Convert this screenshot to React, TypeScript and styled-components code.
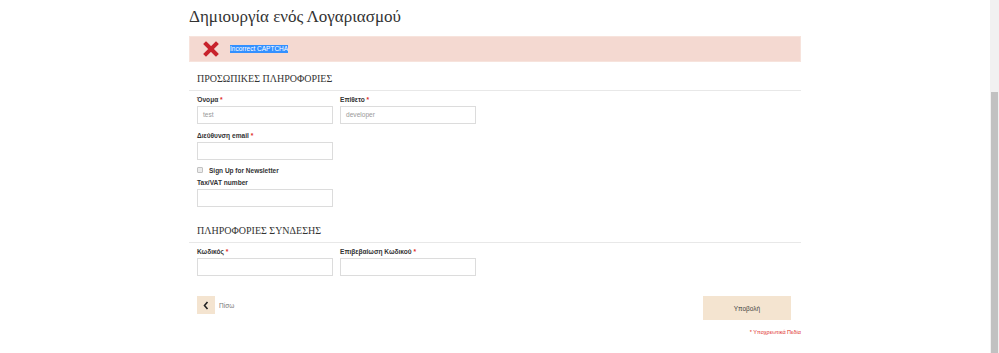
import React from "react";
import styled, { createGlobalStyle } from "styled-components";

const GlobalStyle = createGlobalStyle`
  html, body {
    margin: 0;
    padding: 0;
    background: #fff;
    overflow: hidden;
  }
  * { box-sizing: border-box; }
`;

const sans = `"Liberation Sans", Arial, sans-serif`;
const serif = `"Liberation Serif", "Times New Roman", serif`;

const Page = styled.div`
  display: flex;
  width: 999px;
  height: 353px;
  overflow: hidden;
`;

const Main = styled.main`
  flex: 1;
`;

const Container = styled.div`
  width: 612px;
  margin: 0 auto;
`;

const Title = styled.h1`
  margin: 0;
  padding-top: 4px;
  font-family: ${serif};
  font-weight: normal;
  font-size: 17px;
  line-height: 25px;
  color: #333;
`;

const ErrorBox = styled.div`
  display: flex;
  align-items: center;
  gap: 11px;
  height: 26px;
  margin-top: 7px;
  padding-left: 13px;
  background: #f4d9d1;
  border: 1px solid #f7e3dc;
`;

const Selected = styled.span`
  font-family: ${sans};
  font-size: 6.5px;
  color: #fff;
  background: #3390ff;
  line-height: 8px;
`;

const Section = styled.section<{ $top: number }>`
  margin-top: ${(p) => p.$top}px;
`;

const SectionTitle = styled.h2`
  margin: 0;
  padding: 0 8px 4px;
  font-family: ${serif};
  font-weight: normal;
  font-size: 10px;
  line-height: 14px;
  color: #333;
  border-bottom: 1px solid #e8e8e8;
`;

const Fields = styled.div`
  padding: 4px 8px 0;
`;

const Row = styled.div<{ $gap?: number }>`
  display: grid;
  grid-template-columns: 136px 136px;
  column-gap: 7px;
  margin-top: ${(p) => p.$gap ?? 0}px;
`;

const Field = styled.div`
  display: flex;
  flex-direction: column;
  gap: 1px;
`;

const Label = styled.label`
  font-family: ${sans};
  font-weight: bold;
  font-size: 6.6px;
  line-height: 10px;
  color: #333;
`;

const Req = styled.span`
  color: #e02b27;
`;

const Input = styled.div`
  height: 18px;
  border: 1px solid #dcdcdc;
  background: #fff;
  padding-left: 5px;
  font-family: ${sans};
  font-size: 6.6px;
  line-height: 16px;
  color: #999;
`;

const CheckRow = styled.label`
  display: flex;
  align-items: center;
  gap: 6px;
  height: 12px;
  margin-top: 4px;
  font-family: ${sans};
  font-weight: bold;
  font-size: 6.5px;
  color: #333;
`;

const Box = styled.span`
  width: 6px;
  height: 6px;
  border: 1px solid #c2c2c2;
  border-radius: 1px;
  background: #ececec;
`;

const Actions = styled.div`
  display: flex;
  justify-content: space-between;
  align-items: flex-start;
  margin-top: 20px;
  padding: 0 10px 0 8px;
`;

const Back = styled.span`
  display: flex;
  align-items: center;
  gap: 4px;
  font-family: ${sans};
  font-size: 6.5px;
  color: #777;
`;

const BackIcon = styled.span`
  display: flex;
  align-items: center;
  justify-content: center;
  width: 18px;
  height: 18px;
  background: #f4e4d0;
`;

const Submit = styled.button`
  width: 88px;
  height: 24px;
  border: 0;
  background: #f4e4d0;
  font-family: ${sans};
  font-size: 6.5px;
  color: #444;
  padding: 0;
`;

const Note = styled.div`
  margin-top: 8px;
  text-align: right;
  font-family: ${sans};
  font-size: 5.5px;
  line-height: 8px;
  color: #e02b27;
`;

const Scrollbar = styled.aside`
  width: 9px;
  height: 353px;
  background: #f1f1f1;
  padding: 92px 1px 0;
`;

const Thumb = styled.div`
  height: 100%;
  background: #c1c1c1;
`;

const Cross = () => (
  <svg width="16" height="16" viewBox="0 0 16 16">
    <path d="M3 3 L13 13 M13 3 L3 13" stroke="#c8232c" strokeWidth="4" strokeLinecap="square" />
  </svg>
);

const Chevron = () => (
  <svg width="6" height="9" viewBox="0 0 6 9">
    <path d="M4.5 1 L1.5 4.5 L4.5 8" fill="none" stroke="#222" strokeWidth="1.6" />
  </svg>
);

export default function App() {
  return (
    <>
      <GlobalStyle />
      <Page>
        <Main>
          <Container>
            <Title>Δημιουργία ενός Λογαριασμού</Title>
            <ErrorBox>
              <Cross />
              <Selected>Incorrect CAPTCHA</Selected>
            </ErrorBox>

            <Section $top={10}>
              <SectionTitle>ΠΡΟΣΩΠΙΚΕΣ ΠΛΗΡΟΦΟΡΙΕΣ</SectionTitle>
              <Fields>
                <Row>
                  <Field>
                    <Label>Όνομα <Req>*</Req></Label>
                    <Input>test</Input>
                  </Field>
                  <Field>
                    <Label>Επίθετο <Req>*</Req></Label>
                    <Input>developer</Input>
                  </Field>
                </Row>
                <Row $gap={7}>
                  <Field>
                    <Label>Διεύθυνση email <Req>*</Req></Label>
                    <Input />
                  </Field>
                </Row>
                <CheckRow>
                  <Box />
                  Sign Up for Newsletter
                </CheckRow>
                <Row $gap={2}>
                  <Field>
                    <Label>Tax/VAT number</Label>
                    <Input />
                  </Field>
                </Row>
              </Fields>
            </Section>

            <Section $top={17}>
              <SectionTitle>ΠΛΗΡΟΦΟΡΙΕΣ ΣΥΝΔΕΣΗΣ</SectionTitle>
              <Fields>
                <Row>
                  <Field>
                    <Label>Κωδικός <Req>*</Req></Label>
                    <Input />
                  </Field>
                  <Field>
                    <Label>Επιβεβαίωση Κωδικού <Req>*</Req></Label>
                    <Input />
                  </Field>
                </Row>
              </Fields>
            </Section>

            <Actions>
              <Back>
                <BackIcon>
                  <Chevron />
                </BackIcon>
                Πίσω
              </Back>
              <Submit>Υποβολή</Submit>
            </Actions>
            <Note>* Υποχρεωτικά Πεδία</Note>
          </Container>
        </Main>
        <Scrollbar>
          <Thumb />
        </Scrollbar>
      </Page>
    </>
  );
}
